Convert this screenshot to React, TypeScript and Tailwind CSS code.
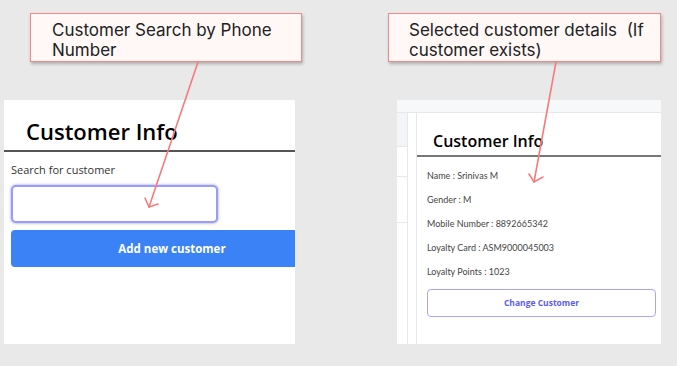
const details = [
  "Name : Srinivas M",
  "Gender : M",
  "Mobile Number : 8892665342",
  "Loyalty Card : ASM9000045003",
  "Loyalty Points : 1023",
];

function Note({ children, className }: { children: React.ReactNode; className: string }) {
  return (
    <div
      className={`h-[49px] border border-[#f08a8a] bg-[#fff8f7] shadow-[1px_2px_3px_rgba(0,0,0,0.25)] text-[17px] leading-[20px] text-[#222] pt-[6px] ${className}`}
      style={{ fontFamily: "Inter, sans-serif" }}
    >
      {children}
    </div>
  );
}

export default function App() {
  return (
    <div
      className="relative w-[677px] h-[366px] bg-[#e9e9e9] overflow-hidden"
      style={{ fontFamily: "'Open Sans', sans-serif" }}
    >
      <div className="flex">
        {/* left: search */}
        <div className="flex flex-col w-[340px]">
          <Note className="ml-[30px] mt-[13px] w-[272px] pl-[21px]">
            Customer Search by Phone
            <br />
            Number
          </Note>
          <div className="ml-[4px] mt-[38px] w-[291px] h-[244px] bg-white overflow-hidden">
            <div className="h-[52px] border-b-2 border-[#555] pl-[22px] pt-[16px]">
              <h1 className="text-[22px] leading-[30px] font-semibold text-black">Customer Info</h1>
            </div>
            <div className="px-[7px] pt-[10px]">
              <p className="text-[11px] leading-[16px] text-[#333]">Search for customer</p>
              <div className="mt-[7px] w-[207px] h-[38px] rounded-[5px] border-2 border-[#9a9cf6] shadow-[0_0_2px_1px_rgba(140,140,255,0.45)] bg-white" />
              <div className="mt-[7px] w-[322px] h-[37px] rounded-[4px] bg-[#3b82f6] flex items-center justify-center">
                <span className="text-white font-bold text-[11.5px]">Add new customer</span>
              </div>
            </div>
          </div>
        </div>

        {/* right: details */}
        <div className="flex flex-col w-[337px]">
          <Note className="ml-[48px] mt-[13px] w-[273px] pl-[20px]">
            Selected customer details&nbsp; (If
            <br />
            customer exists)
          </Note>
          <div className="ml-[57px] mt-[38px] w-[264px] h-[244px] bg-white flex flex-col overflow-hidden">
            <div className="h-[13px] bg-[#f7f8fa] border-b border-[#e6e8ec]" />
            <div className="flex flex-1">
              <div className="w-[11px] bg-white border-r border-[#e6e8ec] flex flex-col">
                <div className="h-[34px] bg-[#f4f5f7] border-b border-[#e6e8ec]" />
                <div className="h-[30px] border-b border-[#e6e8ec]" />
                <div className="h-[46px] border-b border-[#e6e8ec]" />
              </div>
              <div className="w-[8px]" />
              <div className="flex-1 border-l border-t border-[#e6e8ec] -mt-px">
                <div className="h-[44px] border-b-2 border-[#777] pl-[16px] pt-[17px]">
                  <h2 className="text-[16px] leading-[22px] font-semibold text-black">Customer Info</h2>
                </div>
                <div
                  className="pl-[10px] pt-[12px] flex flex-col gap-[10px] text-[9px] leading-[14px] text-[#444]"
                  style={{ fontFamily: "Lato, sans-serif" }}
                >
                  {details.map((d) => (
                    <p key={d}>{d}</p>
                  ))}
                </div>
                <div className="ml-[10px] mt-[10px] w-[229px] h-[28px] rounded-[4px] border border-[#a9a6fb] flex items-center justify-center">
                  <span className="text-[#5d5cf0] font-bold text-[8.5px]">Change Customer</span>
                </div>
              </div>
            </div>
          </div>
        </div>
      </div>

      {/* annotation arrows */}
      <svg className="absolute left-0 top-0" width="677" height="366" fill="none" stroke="#f67b7b" strokeWidth="1.6" strokeLinecap="round">
        <path d="M198 62 L149 207" />
        <path d="M145 198 L149 207 L158 204" />
        <path d="M556 62 L534 182" />
        <path d="M529 174 L534 182 L543 177" />
      </svg>
    </div>
  );
}
